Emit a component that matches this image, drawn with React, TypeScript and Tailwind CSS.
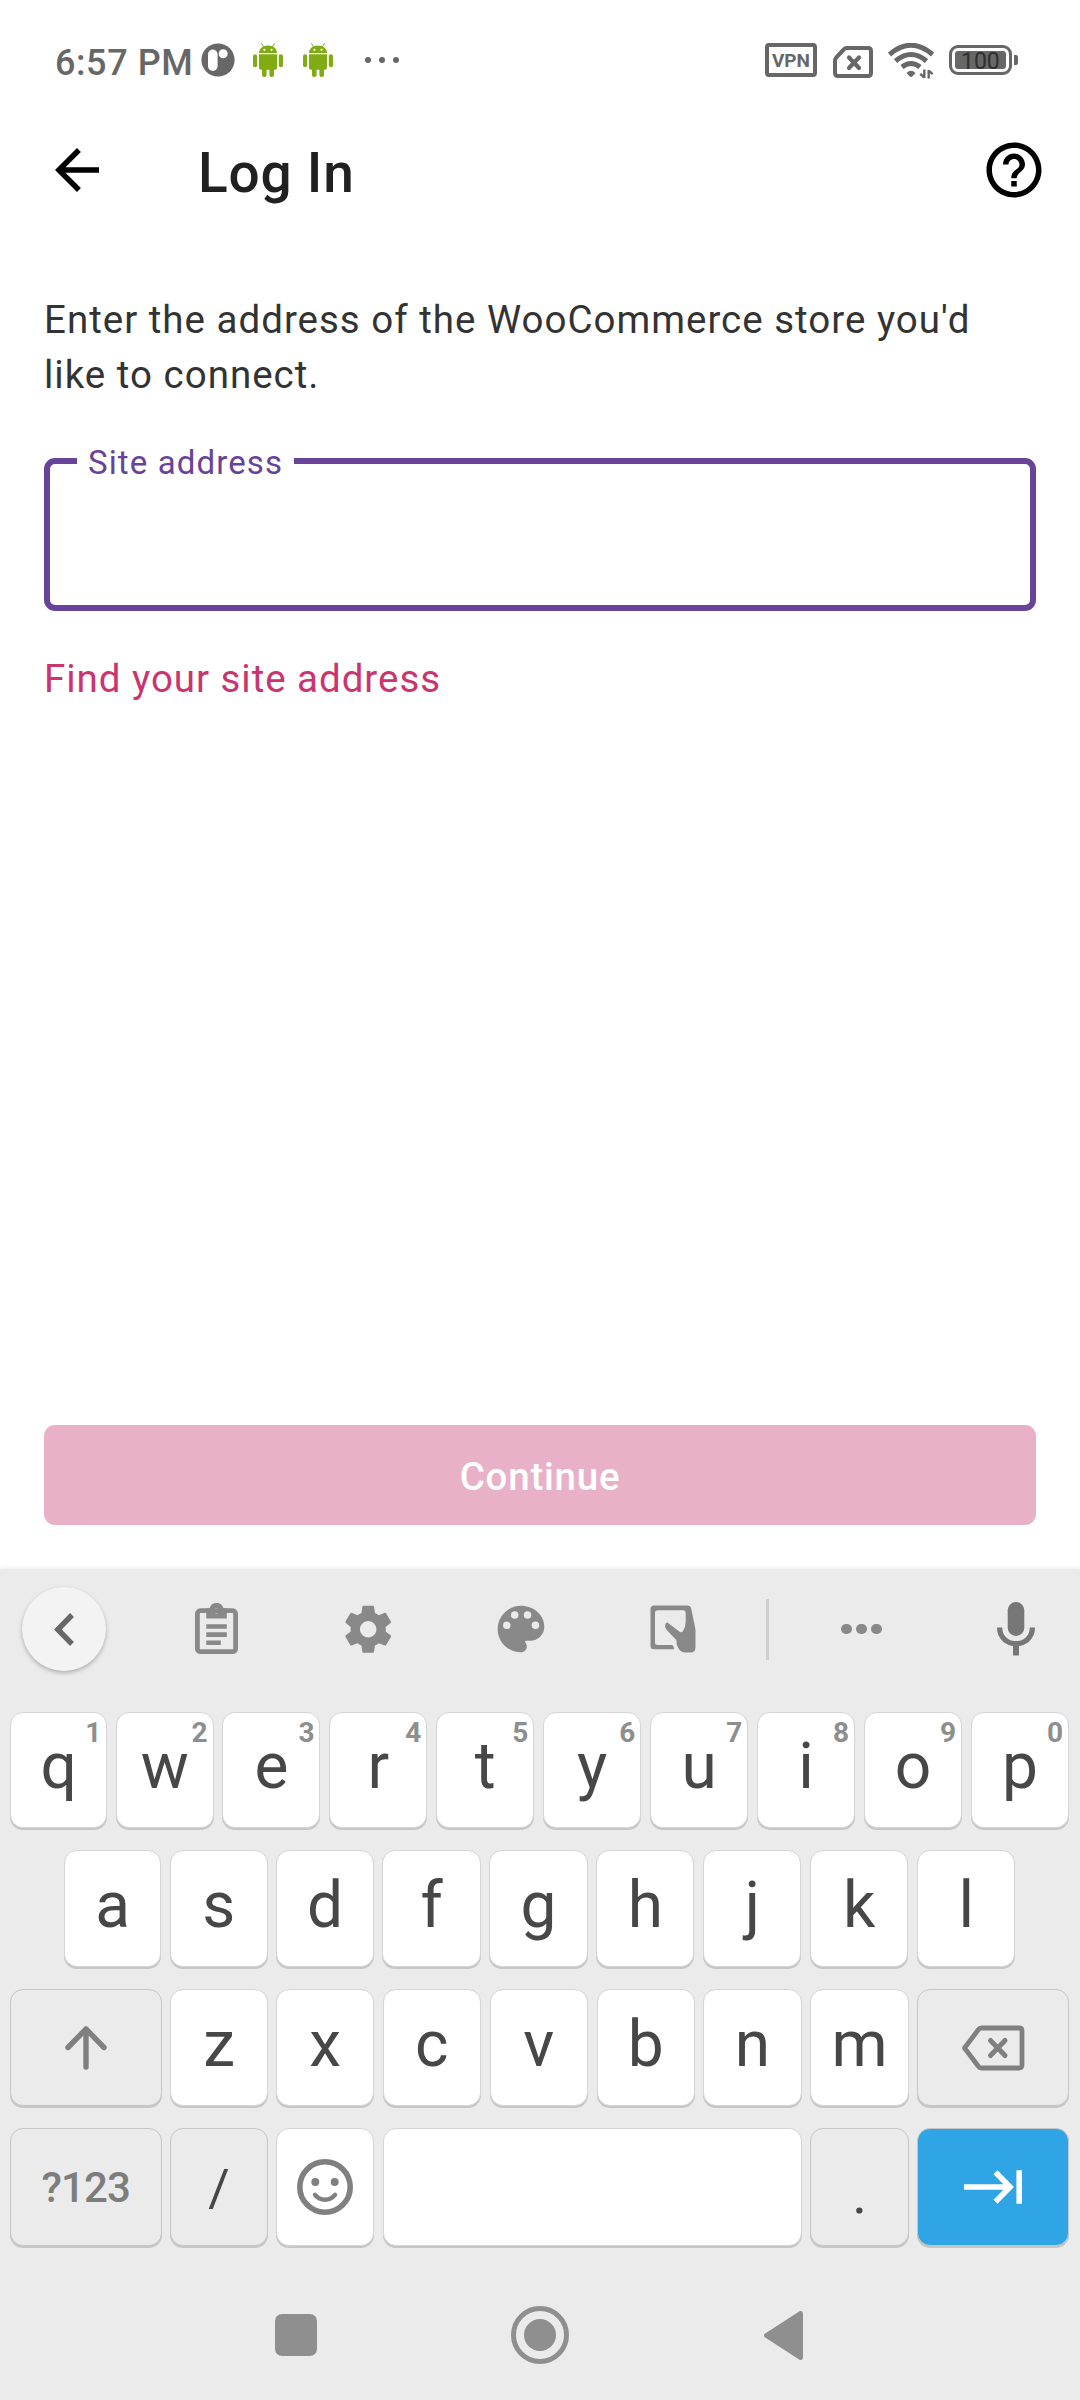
import React from "react";

type KeyProps = { children?: React.ReactNode; hint?: string; tone?: "light" | "muted" | "accent"; className?: string };

const toneClass = {
  light: "bg-white border-[#d5d5d5]",
  muted: "bg-[#ebebeb] border-[#c6c6c6]",
  accent: "bg-[#2fa5e5] border-[#c6c6c6]",
};

function Key({ children, hint, tone = "light", className = "w-[98.2px]" }: KeyProps) {
  return (
    <div
      className={`relative flex shrink-0 items-center justify-center rounded-[13px] border text-[64px] leading-[76px] text-[#474747] shadow-[0_2px_0_#c6c6c6] ${toneClass[tone]} ${className}`}
    >
      {children}
      {hint && (
        <span className="absolute top-[3px] right-[5px] text-[28px] leading-[34px] font-bold text-[#8e8e8e]">{hint}</span>
      )}
    </div>
  );
}

const NARROW = "w-[97.4px]";

function Letter({ ch, hint, narrow }: { ch: string; hint?: string; narrow?: boolean }) {
  return (
    <Key hint={hint} className={narrow ? NARROW : undefined}>
      <span className={hint ? "-mt-[7px]" : "-mt-[5px]"}>{ch}</span>
    </Key>
  );
}

function AndroidRobot() {
  return (
    <svg width="30" height="34" viewBox="0 0 30 34" fill="#80ab12">
      <path d="M8.6.6 10.6 4M21.4.6 19.4 4" stroke="#80ab12" strokeWidth="1" strokeLinecap="round" />
      <path d="M6 10C6 5.5 10 2.4 15 2.4S24 5.5 24 10Z" />
      <circle cx="11.4" cy="6.8" r="1.1" fill="#fff" />
      <circle cx="18.6" cy="6.8" r="1.1" fill="#fff" />
      <path d="M6 11.3h18v13.5a2 2 0 0 1-2 2H8a2 2 0 0 1-2-2Z" />
      <rect x="0" y="11.3" width="4.2" height="13" rx="2.1" />
      <rect x="25.8" y="11.3" width="4.2" height="13" rx="2.1" />
      <rect x="9" y="22" width="4.6" height="12" rx="2.1" />
      <rect x="16.4" y="22" width="4.6" height="12" rx="2.1" />
    </svg>
  );
}

function StatusBar() {
  return (
    <div className="flex h-[120px] items-center pl-[55px] text-[#676767]">
      <span className="w-[146px] pt-[5px] text-[36px] leading-[44px] font-medium tracking-[0.016em] whitespace-nowrap">6:57 PM</span>
      <svg width="34" height="34" viewBox="0 0 34 34">
        <circle cx="17" cy="17" r="16.6" fill="#676767" />
        <rect x="7" y="6.6" width="9.6" height="21.4" rx="4.8" fill="#fff" />
        <circle cx="22.2" cy="10.8" r="4.5" fill="#fff" />
      </svg>
      <div className="ml-[18px] flex gap-[20px]">
        <AndroidRobot />
        <AndroidRobot />
      </div>
      <div className="ml-[32px] flex gap-[8px]">
        <i className="size-[6px] rounded-full bg-[#676767]" />
        <i className="size-[6px] rounded-full bg-[#676767]" />
        <i className="size-[6px] rounded-full bg-[#676767]" />
      </div>
      <div className="ml-[366px] flex h-[34px] w-[52px] items-center justify-center rounded-[4px] border-4 border-[#676767] text-[19px] leading-none font-bold">
        VPN
      </div>
      <svg className="mt-[3px] ml-[16px]" width="40" height="32" viewBox="0 0 40 32" fill="none" stroke="#676767">
        <path d="M13.5 2H35q3 0 3 3v22q0 3-3 3H5q-3 0-3-3V14.5q0-1.6 1.2-2.8L11 3.2Q12 2 13.5 2Z" strokeWidth="4" />
        <path d="m16 11.5 10 10.500M26 11.500 16 22" strokeWidth="4.200" strokeLinecap="round" />
      </svg>
      <svg className="mt-[1px] ml-[15px]" width="46" height="36" viewBox="0 0 46 36" fill="none" stroke="#676767">
        <path d="M1.500 11.500Q23-7 44.500 11.500" strokeWidth="5" />
        <path d="M7.500 18Q23 5 38.500 18" strokeWidth="5" />
        <path d="M14 24Q23 17 32 24" strokeWidth="5" />
        <path d="M18.500 30Q23 25.500 27.500 30L24.500 33.300Q23 34.600 21.500 33.300Z" fill="#676767" stroke="none" />
        <path d="M36.300 26.500V35M36.300 34.500 32.200 30.800M40.700 35.500V27M40.700 27.500 44.600 31.200" strokeWidth="2.400" />
      </svg>
      <div className="relative ml-[15px] flex h-[30px] w-[63px] items-center rounded-[9px] border-[3px] border-[#676767] p-[3px]">
        <div className="h-[18px] w-full rounded-[3px] bg-[#676767]" />
        <span className="absolute top-[1px] left-[9px] text-[23px] leading-[25px] text-[#2f2f2f]">100</span>
      </div>
      <i className="ml-[2px] h-[10px] w-[4px] rounded-r-[2px] bg-[#676767]" />
    </div>
  );
}

function AppBar() {
  return (
    <header className="flex h-[100px] items-center pr-[33px] pl-[44px]">
      <svg width="66" height="66" viewBox="0 0 24 24">
        <path d="M20 11H7.830l5.590-5.590L12 4l-8 8 8 8 1.410-1.410L7.830 13H20v-2z" />
      </svg>
      <h1 className="ml-[88px] flex-1 pt-[6px] text-[55px] leading-[66px] font-medium tracking-[0.014em] text-[#212121]">Log In</h1>
      <svg width="66" height="66" viewBox="0 0 24 24">
        <path d="M11 18h2v-2h-2v2zm1-16C6.480 2 2 6.480 2 12s4.480 10 10 10 10-4.480 10-10S17.520 2 12 2zm0 18c-4.410 0-8-3.590-8-8s3.590-8 8-8 8 3.590 8 8-3.590 8-8 8zm0-14c-2.210 0-4 1.790-4 4h2c0-1.100.9-2 2-2s2 .9 2 2c0 2-3 1.750-3 5h2c0-2.250 3-2.500 3-5 0-2.210-1.790-4-4-4z" />
      </svg>
    </header>
  );
}

const ICON = "#898989";

function Toolbar() {
  return (
    <div className="flex h-[120px] items-center">
      <div className="w-[140px] pl-[22px]">
        <div className="flex size-[84px] items-center justify-center rounded-full bg-[#f3f3f3] shadow-[0_2px_4px_rgba(0,0,0,0.26)]">
          <svg width="20" height="33" viewBox="0 0 20 33" fill="none" stroke="#676767" strokeWidth="5.400">
            <path d="M18 2 3.800 16.500 18 31" />
          </svg>
        </div>
      </div>
      <div className="flex w-[152px] justify-center">
        <svg width="43" height="52" viewBox="0 0 43 52">
          <rect x="2.400" y="7.700" width="38.200" height="41" rx="3" fill="none" stroke={ICON} strokeWidth="4.800" />
          <path fill={ICON} fillRule="evenodd" d="M11.300 15.500V5.300H14.500a7.300 7.300 0 0 1 14 0h3.300v10.200ZM21.500 5a2.700 2.700 0 1 0 0 5.400 2.700 2.700 0 0 0 0-5.400Z" />
          <path d="M11.300 23.500h20.500M11.300 31.600h20.500M11.300 39.800h14.500" stroke={ICON} strokeWidth="4.600" />
        </svg>
      </div>
      <div className="flex w-[153px] justify-center">
        <svg width="56.400" height="56.400" viewBox="0 0 24 24" fill={ICON}>
          <path d="M19.430 12.980c.04-.32.07-.64.07-.98s-.03-.66-.07-.98l2.110-1.650c.19-.15.24-.42.12-.64l-2-3.460c-.12-.22-.39-.3-.61-.22l-2.490 1c-.52-.4-1.080-.73-1.690-.98l-.38-2.650C14.460 2.180 14.250 2 14 2h-4c-.25 0-.46.18-.49.42l-.38 2.650c-.61.25-1.170.59-1.690.98l-2.490-1c-.23-.09-.49 0-.61.22l-2 3.460c-.13.22-.07.49.12.64l2.110 1.650c-.04.32-.07.65-.07.98s.03.66.07.98l-2.110 1.650c-.19.15-.24.42-.12.64l2 3.460c.12.22.39.3.61.22l2.490-1c.52.4 1.080.73 1.690.98l.38 2.650c.03.24.24.42.49.42h4c.25 0 .46-.18.49-.42l.38-2.650c.61-.25 1.170-.59 1.690-.98l2.490 1c.23.09.49 0 .61-.22l2-3.460c.12-.22.07-.49-.12-.64l-2.110-1.650zM12 15.500c-1.930 0-3.500-1.570-3.500-3.500s1.570-3.500 3.500-3.500 3.500 1.570 3.500 3.500-1.570 3.500-3.500 3.500z" />
        </svg>
      </div>
      <div className="flex w-[152px] justify-center">
        <svg width="56" height="56" viewBox="0 0 24 24" fill={ICON}>
          <path d="M12 2C6.490 2 2 6.490 2 12s4.490 10 10 10c1.380 0 2.500-1.120 2.500-2.500 0-.61-.23-1.200-.64-1.670-.08-.1-.13-.21-.13-.33 0-.28.22-.5.5-.5H16c3.310 0 6-2.690 6-6 0-4.960-4.490-9-10-9z" />
          <g fill="#ebebeb">
            <circle cx="5.900" cy="10.400" r="1.600" />
            <circle cx="9.300" cy="6" r="1.600" />
            <circle cx="14.800" cy="6" r="1.600" />
            <circle cx="18.200" cy="10.400" r="1.600" />
          </g>
        </svg>
      </div>
      <div className="flex w-[152px] justify-center">
        <svg width="46" height="48" viewBox="0 0 46 48" fill={ICON}>
          <path
            fillRule="evenodd"
            d="M4 .5H37.500Q40.500 .5 41.200 3.500L45 22Q45.500 24 45.500 26.500V42.500Q45.500 47.500 40.500 47.500H35.500Q31 47.500 28.500 43.500Q26.300 40 26.300 35L16.300 24.500Q14.500 22 15.300 19.500Q16 17 17.700 17.700L30 27Q32 28 33 26Q35.700 22 35.700 17V8Q35.700 5.200 33 5.200H7.700Q5 5.200 5 8V37.500Q5 40 7.700 40H22Q24 40.700 24 44.300H4Q.5 44.300 .5 40.800V4Q.5 .5 4 .5Z"
          />
        </svg>
      </div>
      <i className="ml-[17px] h-[61px] w-[3px] bg-[#cfcfcf]" />
      <div className="flex w-[185px] justify-center gap-[4.600px]">
        <i className="size-[10.700px] rounded-full bg-[#898989]" />
        <i className="size-[10.700px] rounded-full bg-[#898989]" />
        <i className="size-[10.700px] rounded-full bg-[#898989]" />
      </div>
      <div className="flex w-[124px] justify-center">
        <svg width="40" height="54" viewBox="0 0 40 54" fill="none">
          <rect x="11.700" y="0" width="16.600" height="34" rx="8.300" fill="#777" />
          <path d="M3.600 25.500C3.600 35.500 11 41.700 20 41.700S36.400 35.500 36.400 25.500" stroke="#777" strokeWidth="5.200" />
          <path d="M20 42v11.500" stroke="#777" strokeWidth="6" />
        </svg>
      </div>
    </div>
  );
}

function Keyboard() {
  return (
    <section className="flex h-[831px] flex-col bg-[#ebebeb] shadow-[0_-1px_5px_rgba(0,0,0,0.08)]">
      <Toolbar />
      <div className="mt-[23px] flex h-[116px] gap-[8.75px] pl-[10px]">
        {[..."qwertyuiop"].map((c, i) => (
          <Letter key={c} ch={c} hint={String((i + 1) % 10)} narrow={i < 2} />
        ))}
      </div>
      <div className="mt-[22px] flex h-[117px] gap-[8.75px] pl-[64px]">
        {[..."asdfghjkl"].map((c, i) => (
          <Letter key={c} ch={c} narrow={i < 3} />
        ))}
      </div>
      <div className="mt-[22px] flex h-[117px] gap-[8.75px] pl-[10px]">
        <Key tone="muted" className="w-[151.6px]">
          <svg width="42" height="46" viewBox="0 0 42 46" fill="none" stroke="#808080" strokeWidth="5.400" strokeLinecap="round" strokeLinejoin="round">
            <path d="M21 42V4M3 22.500 21 4 39 22.500" />
          </svg>
        </Key>
        {[..."zxcvbnm"].map((c, i) => (
          <Letter key={c} ch={c} narrow={i < 2} />
        ))}
        <Key tone="muted" className="w-[152px]">
          <svg width="64" height="46" viewBox="0 0 64 46" fill="none" stroke="#808080" strokeWidth="4.800" strokeLinejoin="round">
            <path d="M20.500 3H58q3 0 3 3v34q0 3-3 3H20.500q-2 0-3-1.500L3.500 23 17.500 4.500q1-1.500 3-1.500Z" />
            <path d="m29.500 15.500 14.500 15M44 15.500 29.500 30.500" strokeWidth="5" strokeLinecap="round" />
          </svg>
        </Key>
      </div>
      <div className="mt-[22px] flex h-[118px] gap-[8.75px] pr-[10.6px] pl-[10px]">
        <Key tone="muted" className="w-[151.6px]">
          <span className="mt-[2px] text-[42px] leading-[50px] font-medium tracking-[-0.02em] text-[#7d7d7d]">?123</span>
        </Key>
        <Key tone="muted" className={NARROW}>
          <span className="mt-[4px] text-[52px] leading-[60px]">/</span>
        </Key>
        <Key className={NARROW}>
          <svg width="56" height="56" viewBox="0 0 56 56" fill="#808080">
            <circle cx="28" cy="28" r="25.200" fill="none" stroke="#808080" strokeWidth="5.600" />
            <circle cx="18.300" cy="23" r="4" />
            <circle cx="37.700" cy="23" r="4" />
            <path d="M18 35.800Q22 40.700 28 40.700T38 35.800" fill="none" stroke="#808080" strokeWidth="4.400" strokeLinecap="round" />
          </svg>
        </Key>
        <Key className="flex-1" />
        <Key tone="muted">
          <span className="mt-[14px] text-[56px] leading-[66px]">.</span>
        </Key>
        <Key tone="accent" className="w-[152px]">
          <svg width="58" height="36" viewBox="0 0 58 36" fill="none" stroke="#fff" strokeWidth="5.600">
            <path d="M0 18H47M31.500 3.200 46 18 31.500 32.800M55.200 1.300V34.700" />
          </svg>
        </Key>
      </div>
      <nav className="mt-[60px] flex items-center">
        <i className="ml-[275px] h-[42px] w-[42px] rounded-[7px] bg-[#8f8f8f]" />
        <div className="ml-[194px] flex size-[58px] items-center justify-center rounded-full border-[5px] border-[#8f8f8f]">
          <i className="size-[32px] rounded-full bg-[#8f8f8f]" />
        </div>
        <svg className="ml-[195px]" width="39" height="49" viewBox="0 0 39 49">
          <path d="M36.500 2.500V46.500L2.500 24.500Z" fill="#8f8f8f" stroke="#8f8f8f" strokeWidth="5" strokeLinejoin="round" />
        </svg>
      </nav>
    </section>
  );
}

export default function App() {
  return (
    <div className="flex h-[2400px] w-[1080px] flex-col overflow-hidden bg-white font-['Roboto',sans-serif]">
      <StatusBar />
      <AppBar />
      <main className="flex flex-1 flex-col px-[44px] pt-[72px] pb-[44px]">
        <p className="text-[38.5px] leading-[55px] tracking-[0.026em] text-[#333]">
          Enter the address of the WooCommerce store you&apos;d
          <br />
          like to connect.
        </p>
        <div className="relative mt-[56px] h-[153px] rounded-[11px] border-[6px] border-[#674399]">
          <label className="absolute -top-[21px] left-[27px] h-[40px] w-[217px] bg-white pl-[11px] text-[33px] leading-[40px] tracking-[0.034em] whitespace-nowrap text-[#674399]">
            Site address
          </label>
        </div>
        <a className="mt-[40px] text-[38.5px] leading-[55px] tracking-[0.025em] text-[#c9356e]">Find your site address</a>
        <button className="mt-auto flex h-[100px] items-center justify-center rounded-[11px] bg-[#e9b1c8] pt-[4px] text-[38.5px] font-medium tracking-[0.02em] text-white">
          Continue
        </button>
      </main>
      <Keyboard />
    </div>
  );
}
